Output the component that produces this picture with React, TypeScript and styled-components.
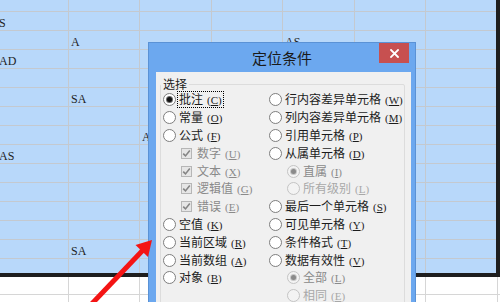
import React from "react";
import styled, { createGlobalStyle } from "styled-components";

const GlobalStyle = createGlobalStyle`
  html, body { margin: 0; padding: 0; overflow: hidden; background: #ffffff; }
  #root { width: 500px; height: 302px; }
`;

const Stage = styled.div`
  position: relative;
  width: 500px;
  height: 302px;
  overflow: hidden;
  background: #ffffff;
`;

/* ---------- spreadsheet ---------- */

const COLS = [72, 71, 72, 71, 72, 71, 72];

const Sheet = styled.div`
  display: flex;
  flex-direction: column;
  margin-left: -3px;
  margin-top: -7px;
`;

const SelectionArea = styled.div`
  --grid: #c4c9cf;
  width: 499px;
  height: 280px;
  overflow: hidden;
  background: #b8d8fa;
  border-right: 4px solid #1e1e1e;
  border-bottom: 4px solid #1e1e1e;
  display: flex;
  flex-direction: column;
`;

const PlainArea = styled.div`
  --grid: #d6d6d6;
  display: flex;
  flex-direction: column;
  background: #ffffff;
`;

const Row = styled.div<{ $h?: number }>`
  display: flex;
  flex: none;
  height: ${(p) => p.$h ?? 19}px;
  box-sizing: border-box;
  border-bottom: 1px solid var(--grid);
`;

const Cell = styled.div<{ $w: number }>`
  flex: none;
  width: ${(p) => p.$w}px;
  box-sizing: border-box;
  border-right: 1px solid var(--grid);
  display: flex;
  align-items: flex-end;
  padding: 0 0 1px 2px;
  font-family: "Liberation Serif", serif;
  font-size: 12px;
  line-height: 11px;
  color: #1f1f1f;
  white-space: nowrap;
  overflow: hidden;
`;

const selectedRows: string[][] = [
  [],
  ["S"],
  ["", "A", "", "", "AS"],
  ["AD"],
  [],
  ["", "SA"],
  [],
  ["", "", "A"],
  ["AS"],
  [],
  [],
  [],
  [],
  ["", "SA"],
  [],
];

const SheetRow: React.FC<{ cells: string[]; h?: number }> = ({ cells, h }) => (
  <Row $h={h}>
    {COLS.map((w, i) => (
      <Cell key={i} $w={w}>
        {cells[i] ?? ""}
      </Cell>
    ))}
  </Row>
);

/* ---------- dialog ---------- */

const Dialog = styled.div`
  position: absolute;
  left: 148px;
  top: 42px;
  width: 268px;
  height: 272px;
  box-sizing: border-box;
  border: 1px solid #5a92d6;
  background: #6ca8ef;
  display: flex;
  flex-direction: column;
`;

const TitleBar = styled.div`
  flex: none;
  height: 29px;
  display: grid;
  grid-template-columns: 1fr auto 1fr;
  align-items: start;
`;

const Title = styled.div`
  grid-column: 2;
  font-family: "Noto Sans CJK SC", "Noto Sans", sans-serif;
  font-size: 15px;
  line-height: 29px;
  color: #1a1a1a;
`;

const CloseButton = styled.div`
  grid-column: 3;
  justify-self: end;
  margin-right: 6px;
  width: 30px;
  height: 20px;
  background: #c75050;
  display: flex;
  align-items: center;
  justify-content: center;
`;

const Body = styled.div`
  flex: 1;
  display: flex;
  padding: 0 7px;
`;

const Panel = styled.div`
  flex: 1;
  background: #f0f0f0;
  padding: 5px 6px 0 4px;
`;

const GroupBox = styled.fieldset`
  margin: 0;
  padding: 0 0 0 2px;
  border: 1px solid #dcdcdc;
  border-radius: 2px;
  min-width: 0;
`;

const Legend = styled.legend`
  padding: 0 2px;
  margin-left: -2px;
  font-family: "Noto Sans CJK SC", "Noto Sans", sans-serif;
  font-size: 12px;
  line-height: 14px;
  color: #1c1c1c;
`;

const Columns = styled.div`
  display: grid;
  grid-template-columns: 106px 1fr;
`;

const Column = styled.div`
  display: flex;
  flex-direction: column;
`;

const Option = styled.div<{ $indent?: boolean }>`
  display: flex;
  align-items: center;
  height: 17.8px;
  padding-left: ${(p) => (p.$indent ? 18 : 0)}px;
`;

const RadioCircle = styled.span<{ $checked?: boolean; $disabled?: boolean }>`
  flex: none;
  width: 13px;
  height: 13px;
  box-sizing: border-box;
  border-radius: 50%;
  border: 1px solid ${(p) => (p.$disabled ? "#c4c4c4" : "#7e7e7e")};
  background: ${(p) => (p.$disabled ? "#f3f3f3" : "#ffffff")};
  margin-right: 3px;
  display: flex;
  align-items: center;
  justify-content: center;
  &::after {
    content: "";
    display: ${(p) => (p.$checked ? "block" : "none")};
    width: 5px;
    height: 5px;
    border-radius: 50%;
    background: ${(p) => (p.$disabled ? "#8a8a8a" : "#121212")};
    box-shadow: 0 0 0 1px ${(p) => (p.$disabled ? "#c8c8c8" : "#6a6a6a")};
  }
`;

const CheckBox = styled.span`
  flex: none;
  width: 11px;
  height: 11px;
  box-sizing: border-box;
  border: 1px solid #b6b6b6;
  background: #e6e6e6;
  margin-right: 5px;
  display: flex;
  align-items: center;
  justify-content: center;
`;

const Label = styled.span<{ $tone?: "normal" | "disabled" | "faint"; $focus?: boolean }>`
  font-family: "Noto Sans CJK SC", "Noto Sans", sans-serif;
  font-size: 12px;
  line-height: 14px;
  white-space: nowrap;
  color: ${(p) =>
    p.$tone === "disabled" ? "#8a8a8a" : p.$tone === "faint" ? "#a8a8a8" : "#1c1c1c"};
  outline: ${(p) => (p.$focus ? "1px dotted #000" : "none")};
  outline-offset: 0;
  padding: 0 1px 0 0;
  margin-left: ${(p) => (p.$focus ? -1 : 0)}px;
  padding-left: ${(p) => (p.$focus ? 1 : 0)}px;
`;

const Hotkey = styled.span`
  font-family: "Liberation Serif", serif;
  font-size: 11px;
  margin-left: 4px;
  u {
    text-decoration: underline;
    text-underline-offset: 1px;
  }
`;

type Item = {
  text: string;
  key: string;
  kind: "radio" | "check";
  checked?: boolean;
  disabled?: boolean;
  faint?: boolean;
  indent?: boolean;
  focus?: boolean;
};

const leftItems: Item[] = [
  { text: "批注", key: "C", kind: "radio", checked: true, focus: true },
  { text: "常量", key: "O", kind: "radio" },
  { text: "公式", key: "F", kind: "radio" },
  { text: "数字", key: "U", kind: "check", checked: true, disabled: true, indent: true },
  { text: "文本", key: "X", kind: "check", checked: true, disabled: true, indent: true },
  { text: "逻辑值", key: "G", kind: "check", checked: true, disabled: true, indent: true },
  { text: "错误", key: "E", kind: "check", checked: true, disabled: true, indent: true },
  { text: "空值", key: "K", kind: "radio" },
  { text: "当前区域", key: "R", kind: "radio" },
  { text: "当前数组", key: "A", kind: "radio" },
  { text: "对象", key: "B", kind: "radio" },
];

const rightItems: Item[] = [
  { text: "行内容差异单元格", key: "W", kind: "radio" },
  { text: "列内容差异单元格", key: "M", kind: "radio" },
  { text: "引用单元格", key: "P", kind: "radio" },
  { text: "从属单元格", key: "D", kind: "radio" },
  { text: "直属", key: "I", kind: "radio", checked: true, disabled: true, indent: true },
  { text: "所有级别", key: "L", kind: "radio", disabled: true, faint: true, indent: true },
  { text: "最后一个单元格", key: "S", kind: "radio" },
  { text: "可见单元格", key: "Y", kind: "radio" },
  { text: "条件格式", key: "T", kind: "radio" },
  { text: "数据有效性", key: "V", kind: "radio" },
  { text: "全部", key: "L", kind: "radio", checked: true, disabled: true, indent: true },
  { text: "相同", key: "E", kind: "radio", disabled: true, faint: true, indent: true },
];

const CheckMark = () => (
  <svg width="9" height="9" viewBox="0 0 9 9">
    <polyline points="1.2,4.6 3.5,6.9 7.8,1.6" fill="none" stroke="#858585" strokeWidth="1.6" />
  </svg>
);

const OptionRow: React.FC<{ item: Item }> = ({ item }) => (
  <Option $indent={item.indent}>
    {item.kind === "radio" ? (
      <RadioCircle $checked={item.checked} $disabled={item.disabled} />
    ) : (
      <CheckBox>{item.checked && <CheckMark />}</CheckBox>
    )}
    <Label $tone={item.faint ? "faint" : item.disabled ? "disabled" : "normal"} $focus={item.focus}>
      {item.text}
      <Hotkey>
        (<u>{item.key}</u>)
      </Hotkey>
    </Label>
  </Option>
);

/* ---------- arrow overlay ---------- */

const ArrowLayer = styled.svg`
  position: absolute;
  left: 0;
  top: 0;
  pointer-events: none;
`;

export default function App() {
  return (
    <>
      <GlobalStyle />
      <Stage>
        <Sheet>
          <SelectionArea>
            {selectedRows.map((cells, i) => (
              <SheetRow key={i} cells={cells} />
            ))}
          </SelectionArea>
          <PlainArea>
            <SheetRow cells={[]} h={18} />
            <SheetRow cells={[]} />
          </PlainArea>
        </Sheet>

        <Dialog>
          <TitleBar>
            <Title>定位条件</Title>
            <CloseButton>
              <svg width="9" height="9" viewBox="0 0 9 9">
                <path d="M1 1 L8 8 M8 1 L1 8" stroke="#ffffff" strokeWidth="1.8" strokeLinecap="square" />
              </svg>
            </CloseButton>
          </TitleBar>
          <Body>
            <Panel>
              <GroupBox>
                <Legend>选择</Legend>
                <Columns>
                  <Column>
                    {leftItems.map((it, i) => (
                      <OptionRow key={i} item={it} />
                    ))}
                  </Column>
                  <Column>
                    {rightItems.map((it, i) => (
                      <OptionRow key={i} item={it} />
                    ))}
                  </Column>
                </Columns>
              </GroupBox>
            </Panel>
          </Body>
        </Dialog>

        <ArrowLayer width="500" height="302" viewBox="0 0 500 302">
          <line x1="84" y1="312" x2="144" y2="249" stroke="#f41414" strokeWidth="5" />
          <polygon points="152,240 135.5,245 148,257" fill="#f41414" />
        </ArrowLayer>
      </Stage>
    </>
  );
}
